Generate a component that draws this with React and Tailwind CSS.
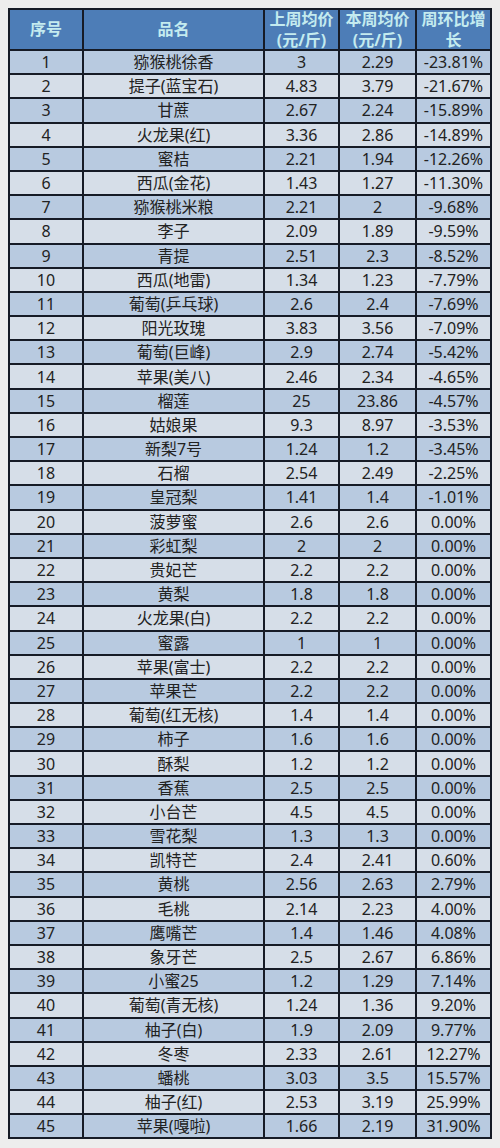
import React from "react";

const rows = [
  ["猕猴桃徐香", "3", "2.29", "-23.81%"],
  ["提子(蓝宝石)", "4.83", "3.79", "-21.67%"],
  ["甘蔗", "2.67", "2.24", "-15.89%"],
  ["火龙果(红)", "3.36", "2.86", "-14.89%"],
  ["蜜桔", "2.21", "1.94", "-12.26%"],
  ["西瓜(金花)", "1.43", "1.27", "-11.30%"],
  ["猕猴桃米粮", "2.21", "2", "-9.68%"],
  ["李子", "2.09", "1.89", "-9.59%"],
  ["青提", "2.51", "2.3", "-8.52%"],
  ["西瓜(地雷)", "1.34", "1.23", "-7.79%"],
  ["葡萄(乒乓球)", "2.6", "2.4", "-7.69%"],
  ["阳光玫瑰", "3.83", "3.56", "-7.09%"],
  ["葡萄(巨峰)", "2.9", "2.74", "-5.42%"],
  ["苹果(美八)", "2.46", "2.34", "-4.65%"],
  ["榴莲", "25", "23.86", "-4.57%"],
  ["姑娘果", "9.3", "8.97", "-3.53%"],
  ["新梨7号", "1.24", "1.2", "-3.45%"],
  ["石榴", "2.54", "2.49", "-2.25%"],
  ["皇冠梨", "1.41", "1.4", "-1.01%"],
  ["菠萝蜜", "2.6", "2.6", "0.00%"],
  ["彩虹梨", "2", "2", "0.00%"],
  ["贵妃芒", "2.2", "2.2", "0.00%"],
  ["黄梨", "1.8", "1.8", "0.00%"],
  ["火龙果(白)", "2.2", "2.2", "0.00%"],
  ["蜜露", "1", "1", "0.00%"],
  ["苹果(富士)", "2.2", "2.2", "0.00%"],
  ["苹果芒", "2.2", "2.2", "0.00%"],
  ["葡萄(红无核)", "1.4", "1.4", "0.00%"],
  ["柿子", "1.6", "1.6", "0.00%"],
  ["酥梨", "1.2", "1.2", "0.00%"],
  ["香蕉", "2.5", "2.5", "0.00%"],
  ["小台芒", "4.5", "4.5", "0.00%"],
  ["雪花梨", "1.3", "1.3", "0.00%"],
  ["凯特芒", "2.4", "2.41", "0.60%"],
  ["黄桃", "2.56", "2.63", "2.79%"],
  ["毛桃", "2.14", "2.23", "4.00%"],
  ["鹰嘴芒", "1.4", "1.46", "4.08%"],
  ["象牙芒", "2.5", "2.67", "6.86%"],
  ["小蜜25", "1.2", "1.29", "7.14%"],
  ["葡萄(青无核)", "1.24", "1.36", "9.20%"],
  ["柚子(白)", "1.9", "2.09", "9.77%"],
  ["冬枣", "2.33", "2.61", "12.27%"],
  ["蟠桃", "3.03", "3.5", "15.57%"],
  ["柚子(红)", "2.53", "3.19", "25.99%"],
  ["苹果(嘎啦)", "1.66", "2.19", "31.90%"],
];

const headers = ["序号", "品名", "上周均价(元/斤)", "本周均价(元/斤)", "周环比增长"];

function App() {
  return (
    <div
      className="min-h-screen bg-[#ededed] pt-[8px] pl-[8px]"
      style={{ fontFamily: '"Noto Sans", "Noto Sans CJK SC", sans-serif' }}
    >
      <div className="grid w-[484px] grid-cols-[72px_179px_73px_75px_73px] gap-[2px] bg-[#161b26] p-[2px] text-[16px] text-[#222]">
        {headers.map((h) => (
          <div
            key={h}
            className="flex h-[39px] items-center justify-center bg-[#4d7db7] px-[2px] text-center text-[16px] font-bold leading-[21px] text-[#c4ebef]"
          >
            {h}
          </div>
        ))}
        {rows.map((r, i) => {
          const bg = i % 2 === 0 ? "bg-[#b8cae0]" : "bg-[#d6dee8]";
          return (
            <React.Fragment key={i}>
              <div className={`${bg} flex h-[22.2px] items-center justify-center leading-none`}>
                {i + 1}
              </div>
              {r.map((c, j) => (
                <div
                  key={j}
                  className={`${bg} flex h-[22.2px] items-center justify-center whitespace-nowrap leading-none`}
                >
                  {c}
                </div>
              ))}
            </React.Fragment>
          );
        })}
      </div>
    </div>
  );
}

export default App;
